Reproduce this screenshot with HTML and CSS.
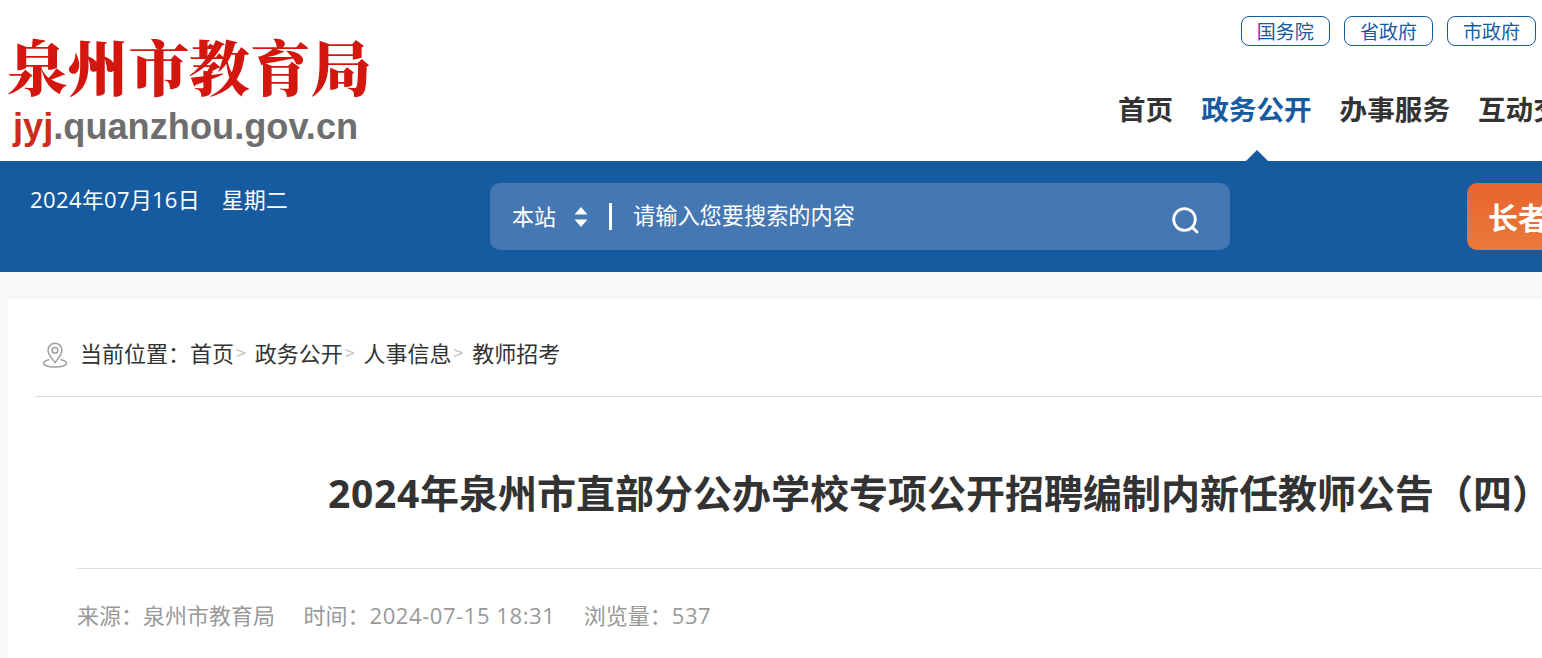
FILE: index.html
```html
<!DOCTYPE html>
<html lang="zh-CN">
<head>
<meta charset="utf-8">
<title>2024年泉州市直部分公办学校专项公开招聘编制内新任教师公告（四）</title>
<link rel="stylesheet" href="styles.css">
</head>
<body>
<div class="page">
  <header class="header">
    <a class="logo">
      <span class="logo-name">泉州市教育局</span>
      <span class="logo-url"><b>jyj</b>.quanzhou.gov.cn</span>
    </a>
    <div class="header-right">
      <div class="gov-links">
        <a class="gov-link">国务院</a>
        <a class="gov-link">省政府</a>
        <a class="gov-link">市政府</a>
      </div>
      <nav class="nav">
        <a class="nav-item">首页</a>
        <a class="nav-item active">政务公开</a>
        <a class="nav-item">办事服务</a>
        <a class="nav-item">互动交流</a>
      </nav>
    </div>
  </header>
  <section class="band">
    <div class="date"><span><span class="num">2024</span>年<span class="num">07</span>月<span class="num">16</span>日</span><span>星期二</span></div>
    <div class="search">
      <span class="scope">本站</span>
      <svg class="updown" width="14" height="20" viewBox="0 0 14 20"><path d="M7 0 L13.5 7.5 H0.5 Z M0.5 12.5 H13.5 L7 20 Z" fill="#fff"/></svg>
      <span class="divider"></span>
      <span class="placeholder">请输入您要搜索的内容</span>
      <svg class="search-icon" width="28" height="28" viewBox="0 0 28 28" fill="none" stroke="#fff" stroke-width="2.8" stroke-linecap="round"><circle cx="13.5" cy="13.5" r="10.8"/><path d="M21.5 21.5 L26 26"/></svg>
    </div>
    <a class="elder">长者模式</a>
  </section>
  <main class="main">
    <article class="card">
      <div class="crumbs">
        <svg class="pin" width="26" height="26" viewBox="0 0 26 26" fill="none" stroke="#a0a0a0" stroke-width="1.5"><path d="M13 20.5 C9 15.5 6 12.5 6 8.3 A7 7 0 0 1 20 8.3 C20 12.5 17 15.5 13 20.5 Z"/><circle cx="13" cy="8.3" r="2.9"/><path d="M7.5 17.5 C3.5 18.5 1.5 19.8 1.5 21.3 C1.5 23.5 6.5 25 13 25 C19.5 25 24.5 23.5 24.5 21.3 C24.5 19.8 22.5 18.5 18.5 17.5"/></svg>
        <span class="crumb-label">当前位置：</span>
        <a class="crumb">首页</a><i class="sep">&gt;</i>
        <a class="crumb">政务公开</a><i class="sep">&gt;</i>
        <a class="crumb">人事信息</a><i class="sep">&gt;</i>
        <a class="crumb">教师招考</a>
      </div>
      <div class="article">
        <h1 class="title"><span class="num">2024</span>年泉州市直部分公办学校专项公开招聘编制内新任教师公告（四）</h1>
        <div class="meta"><span>来源：泉州市教育局</span><span>时间：<span class="num">2024-07-15 18:31</span></span><span>浏览量：<span class="num">537</span></span></div>
      </div>
    </article>
  </main>
</div>
</body>
</html>
```
FILE: styles.css
```css
* { box-sizing: border-box; }
html, body { margin: 0; padding: 0; height: 658px; overflow: hidden; background: #f8f8f8; }
body { font-family: "Noto Sans CJK SC", "Noto Sans", sans-serif; color: #333; }
i { font-style: normal; }
.num { font-family: "Open Sans", sans-serif; letter-spacing: 0.018em; }
.page { width: 1837px; }
.header { height: 161px; background: #fff; display: flex; }
.logo { width: 1118px; padding: 30px 0 0 7px; display: flex; flex-direction: column; }
.logo-name { font-family: "Noto Serif CJK SC", "Noto Sans CJK SC", sans-serif; font-size: 60.7px; line-height: 70px; font-weight: 900; color: #d3170f; white-space: nowrap; }
.logo-url { font-family: "Liberation Sans", sans-serif; font-size: 36.2px; line-height: 42px; margin-top: 6px; font-weight: 700; color: #6e6e6e; padding-left: 6px; white-space: nowrap; }
.logo-url b { color: #cf2a1e; }
.header-right { flex: 1; }
.gov-links { display: flex; gap: 14.4px; padding: 16px 0 0 123px; }
.gov-link { width: 88.7px; height: 30px; border: 1px solid #165a9f; border-radius: 8px; color: #165a9f; font-size: 19px; line-height: 27px; text-align: center; }
.nav { display: flex; gap: 28px; padding-top: 27px; }
.nav-item { position: relative; font-size: 27.6px; line-height: 71px; height: 88px; font-weight: 700; color: #333; white-space: nowrap; }
.nav-item.active { color: #165a9f; }
.nav-item.active::after { content: ""; position: absolute; left: 45px; bottom: 0; border: 11px solid transparent; border-top: 0; border-bottom-color: #165a9f; }
.band { height: 111px; background: #165a9f; display: flex; align-items: flex-start; color: #fff; }
.date { width: 490px; padding: 21px 0 0 30px; font-size: 22px; line-height: 33px; display: flex; gap: 22px; }
.search { width: 740px; height: 67px; margin-top: 22px; border-radius: 10px; background: #4577b2; display: flex; align-items: center; padding: 0 31px 0 22px; font-size: 22px; }
.scope { margin-top: -3px; }
.updown { margin-left: 18px; }
.divider { width: 3px; height: 27px; background: #fff; margin: 0 21px 0 21px; }
.placeholder { flex: 1; margin-top: -5px; font-size: 22.2px; }
.search-icon { margin-top: 7px; }
.elder { margin: 22px 0 0 237px; width: 200px; height: 67px; border-radius: 10px 0 0 10px; background: linear-gradient(#e8642f, #e97a3a); font-size: 30px; font-weight: 700; line-height: 67px; padding-left: 21px; white-space: nowrap; }
.main { padding: 27px 8px 0; }
.card { background: #fff; padding: 0 27px; height: 400px; }
.crumbs { height: 98px; border-bottom: 1px solid #ddd; display: flex; align-items: center; padding: 8px 0 0 7px; font-size: 22px; white-space: nowrap; }
.pin { margin-right: 12px; margin-top: 7px; }
.sep { color: #c4c4c4; font-size: 18px; margin: 0 8.7px 0 2px; }
.article { padding-left: 42px; }
.title { margin: 0; height: 172px; border-bottom: 1px solid #ddd; font-size: 39px; line-height: 64px; padding-top: 62px; font-weight: 700; color: #333; text-align: center; white-space: nowrap; }
.meta { display: flex; gap: 28.5px; padding-top: 29px; font-size: 22px; line-height: 33px; color: #999; }
.meta .num { letter-spacing: 0.026em; }
```
